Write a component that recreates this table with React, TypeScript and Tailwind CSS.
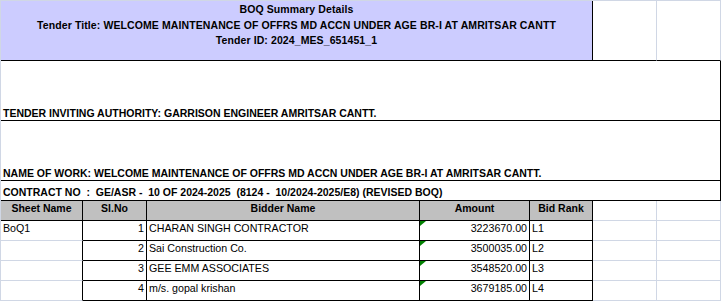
import type { ReactNode } from "react";

interface Bid {
	sheet: string;
	no: number;
	name: string;
	amount: string;
	rank: string;
}

const bids: Bid[] = [
	{ sheet: "BoQ1", no: 1, name: "CHARAN SINGH CONTRACTOR", amount: "3223670.00", rank: "L1" },
	{ sheet: "", no: 2, name: "Sai Construction Co.", amount: "3500035.00", rank: "L2" },
	{ sheet: "", no: 3, name: "GEE EMM ASSOCIATES", amount: "3548520.00", rank: "L3" },
	{ sheet: "", no: 4, name: "m/s. gopal krishan", amount: "3679185.00", rank: "L4" },
];

// grid line = pale excel blue, box = black cell border
function Cell({ className = "", children }: { className?: string; children?: ReactNode }) {
	return <div className={`border-r border-b ${className}`}>{children}</div>;
}

function Flag() {
	return (
		<span className="absolute top-0 left-0 h-0 w-0 border-t-[5px] border-r-[6px] border-t-[#008000] border-r-transparent" />
	);
}

export default function App() {
	return (
		<div className="bg-white font-['Liberation_Sans',Arial,sans-serif] text-black">
			<div className="grid w-fit grid-cols-[82px_64px_273px_110px_63px_64px_64px] grid-rows-[60px_60px_60px_20px_20px_20px_20px_20px_20px] border-t border-l border-[#d0d7e5]">
				{/* title block */}
				<Cell className="col-span-5 border-r-black border-b-black bg-[#ccccff] pt-[1px] text-center text-[10.5px] leading-[15.5px] font-bold">
					<div className="tracking-[0.1px]">BOQ Summary Details</div>
					<div className="tracking-[0.1px]">
						Tender Title: WELCOME MAINTENANCE OF OFFRS MD ACCN UNDER AGE BR-I AT AMRITSAR CANTT
					</div>
					<div className="tracking-[0.1px]">Tender ID: 2024_MES_651451_1</div>
				</Cell>
				<Cell className="border-r-[#d0d7e5] border-b-black" />
				<Cell className="border-r-[#d0d7e5] border-b-black" />

				<Cell className="col-span-7 flex items-end border-black px-[2px] pb-[1px] text-[10.5px] leading-[12px] font-bold">
					TENDER INVITING AUTHORITY: GARRISON ENGINEER AMRITSAR CANTT.
				</Cell>
				<Cell className="col-span-7 flex items-end border-black px-[2px] pb-[1px] text-[10.5px] leading-[12px] font-bold">
					NAME OF WORK: WELCOME MAINTENANCE OF OFFRS MD ACCN UNDER AGE BR-I AT AMRITSAR CANTT.
				</Cell>
				<Cell className="col-span-7 flex items-end border-black px-[2px] pb-[2px] text-[10.5px] leading-[12px] font-bold whitespace-pre">
					{"CONTRACT NO  :  GE/ASR -  10 OF 2024-2025  (8124 -  10/2024-2025/E8) (REVISED BOQ)"}
				</Cell>

				{/* table header */}
				{["Sheet Name", "Sl.No", "Bidder Name", "Amount", "Bid Rank"].map((h) => (
					<Cell
						key={h}
						className="border-black bg-[#c0c0c0] pt-[1px] text-center text-[10.5px] leading-[12px] font-bold"
					>
						{h}
					</Cell>
				))}
				<Cell className="border-[#d0d7e5]" />
				<Cell className="border-[#d0d7e5]" />

				{bids.map((b) => (
					<div key={b.no} className="contents text-[10.67px] leading-[12px]">
						<Cell className="border-r-black border-b-[#d0d7e5] px-[2px] pt-[1px]">{b.sheet}</Cell>
						<Cell className="border-black px-[2px] pt-[1px] text-right">{b.no}</Cell>
						<Cell className="border-black px-[2px] pt-[1px]">{b.name}</Cell>
						<Cell className="relative border-black px-[2px] pt-[1px] text-right">
							<Flag />
							{b.amount}
						</Cell>
						<Cell className="border-black px-[2px] pt-[1px]">{b.rank}</Cell>
						<Cell className="border-[#d0d7e5]" />
						<Cell className="border-[#d0d7e5]" />
					</div>
				))}
			</div>
		</div>
	);
}
